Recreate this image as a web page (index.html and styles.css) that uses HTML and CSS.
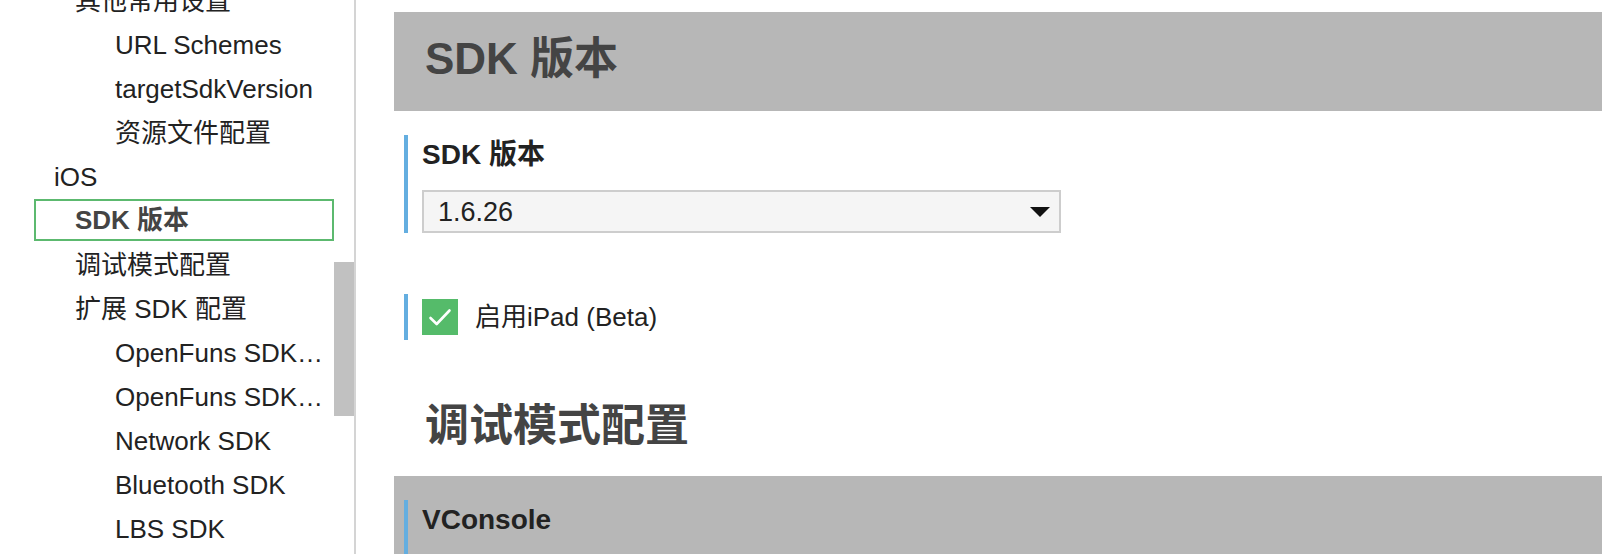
FILE: index.html
```html
<!DOCTYPE html>
<html lang="zh-CN">
<head>
<meta charset="utf-8">
<title>SDK 版本</title>
<link rel="stylesheet" href="styles.css">
</head>
<body>
<div class="layout">
  <aside class="sidebar">
    <ul class="nav">
      <li class="item lvl2">其他常用设置</li>
      <li class="item lvl3">URL Schemes</li>
      <li class="item lvl3">targetSdkVersion</li>
      <li class="item lvl3">资源文件配置</li>
      <li class="item lvl1">iOS</li>
      <li class="item lvl2 active">SDK 版本</li>
      <li class="item lvl2">调试模式配置</li>
      <li class="item lvl2">扩展 SDK 配置</li>
      <li class="item lvl3">OpenFuns SDK 基础能力配置</li>
      <li class="item lvl3">OpenFuns SDK 扩展能力配置</li>
      <li class="item lvl3">Network SDK</li>
      <li class="item lvl3">Bluetooth SDK</li>
      <li class="item lvl3">LBS SDK</li>
    </ul>
    <div class="scroll-thumb"></div>
  </aside>
  <main class="main">
    <section class="section-bar">
      <h1 class="section-title">SDK 版本</h1>
    </section>
    <div class="field">
      <div class="field-label">SDK 版本</div>
      <div class="select">
        <span class="select-value">1.6.26</span>
        <svg class="select-arrow" width="20" height="10" viewBox="0 0 20 10"><polygon points="0,0 20,0 10,10" fill="#111"/></svg>
      </div>
    </div>
    <div class="field check-field">
      <span class="checkbox">
        <svg width="36" height="36" viewBox="0 0 36 36"><polyline points="8.5,19 14.7,25 27.5,11.5" fill="none" stroke="#fff" stroke-width="2.6" stroke-linecap="round" stroke-linejoin="round"/></svg>
      </span>
      <span class="check-label">启用iPad (Beta)</span>
    </div>
    <h2 class="plain-title">调试模式配置</h2>
    <section class="section-bar bottom-bar">
      <div class="field bar-field">
        <div class="field-label">VConsole</div>
      </div>
    </section>
  </main>
</div>
</body>
</html>
```

FILE: styles.css
```css
html, body {
  margin: 0;
  padding: 0;
  height: 100%;
  overflow: hidden;
  background: #fff;
}

body {
  font-family: "Liberation Sans", "Noto Sans CJK SC", sans-serif;
  color: #222;
}

.layout {
  display: flex;
  height: 100%;
}

.sidebar {
  position: relative;
  width: 354px;
  flex: none;
  border-right: 2px solid #d4d4d4;
  overflow: hidden;
}

.nav {
  list-style: none;
  margin: -21px 0 0 0;
  padding: 0;
  width: 334px;
}

.item {
  height: 44px;
  line-height: 44px;
  font-size: 26px;
  color: #222;
  white-space: nowrap;
  overflow: hidden;
  text-overflow: ellipsis;
  padding-right: 10px;
  box-sizing: border-box;
}

.lvl1 { padding-left: 54px; }
.lvl2 { padding-left: 75px; }
.lvl3 { padding-left: 115px; }

.item.active {
  margin-left: 34px;
  width: 300px;
  height: 42px;
  line-height: 38px;
  margin-bottom: 2px;
  border: 2px solid #5cb96f;
  padding-left: 39px;
  font-weight: bold;
  color: #444;
}

.scroll-thumb {
  position: absolute;
  left: 334px;
  top: 262px;
  width: 20px;
  height: 154px;
  background: #c1c1c1;
}

.main {
  flex: 1;
  padding-left: 38px;
  min-width: 0;
}

.section-bar {
  background: #b7b7b7;
  margin-top: 12px;
}

.section-title {
  margin: 0;
  height: 99px;
  box-sizing: border-box;
  padding: 0 0 5px 31px;
  display: flex;
  align-items: center;
  font-size: 44px;
  line-height: 50px;
  font-weight: bold;
  color: #444;
}

.field {
  margin: 24px 0 0 10px;
  border-left: 4px solid #64aee0;
  padding-left: 14px;
}

.field-label {
  font-size: 28px;
  font-weight: bold;
  line-height: 40px;
  color: #222;
}

.select {
  margin-top: 15px;
  width: 639px;
  height: 43px;
  box-sizing: border-box;
  border: 2px solid #cdcdcd;
  background: #f5f5f5;
  display: flex;
  align-items: center;
  justify-content: space-between;
  padding: 0 9px 0 14px;
}

.select-value {
  font-size: 27px;
  line-height: 30px;
  color: #222;
}

.select-arrow {
  display: block;
}

.check-field {
  margin-top: 61px;
  height: 46px;
  display: flex;
  align-items: center;
  gap: 17px;
}

.checkbox {
  width: 36px;
  height: 36px;
  background: #55bb6a;
  display: flex;
}

.check-label {
  font-size: 26px;
  line-height: 30px;
  color: #222;
}

.plain-title {
  margin: 56px 0 20px 31px;
  font-size: 44px;
  line-height: 60px;
  font-weight: bold;
  color: #444;
}

.bottom-bar {
  margin-top: 0;
  height: 200px;
  padding-top: 24px;
  box-sizing: border-box;
}

.bar-field {
  margin-top: 0;
  height: 200px;
}
```
